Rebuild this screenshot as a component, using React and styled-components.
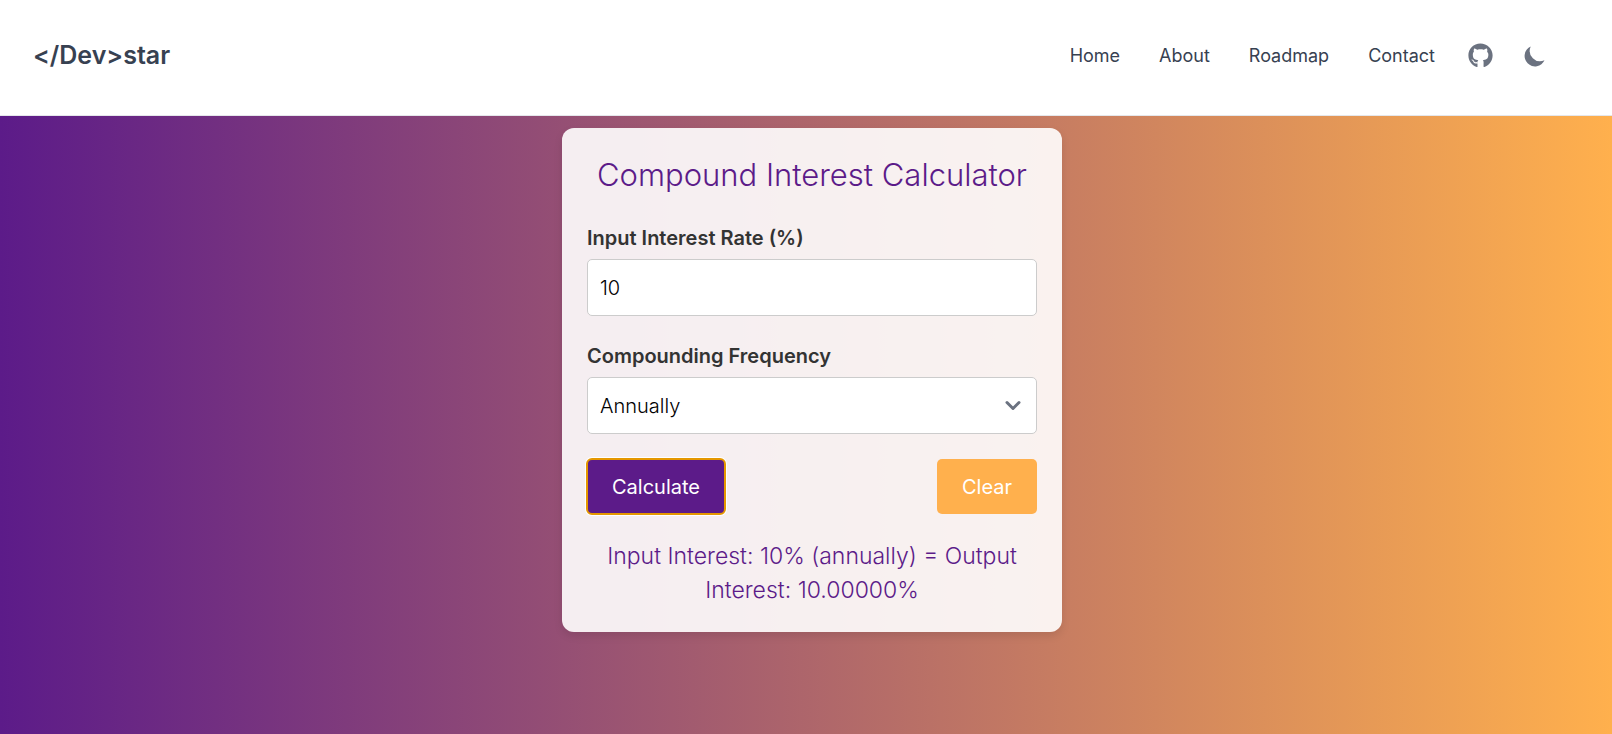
import React, { useState } from "react";
import styled, { createGlobalStyle } from "styled-components";
import { FaGithub } from "react-icons/fa";

const GlobalStyle = createGlobalStyle`
  *, *::before, *::after { box-sizing: border-box; }
  body {
    margin: 0;
    font-family: Inter, "Liberation Sans", sans-serif;
    font-optical-sizing: none;
    background: #fff;
  }
  h1, p { margin: 0; }
  button, input, select { font: inherit; font-optical-sizing: none; }
`;

const Page = styled.div`
  display: flex;
  flex-direction: column;
  min-height: 100vh;
`;

const Header = styled.header`
  display: flex;
  align-items: center;
  justify-content: space-between;
  padding: 32px 64px 36px 33px;
  border-bottom: 1px solid #e5e7eb;
`;

const Brand = styled.a`
  color: #374151;
  font-size: 25px;
  line-height: 47px;
  font-weight: 600;
  text-decoration: none;
`;

const Nav = styled.nav`
  display: flex;
  align-items: center;
  gap: 39px;
`;

const NavLink = styled.a`
  color: #374151;
  font-size: 18px;
  line-height: 28px;
  text-decoration: none;
`;

const NavIcons = styled.div`
  display: flex;
  align-items: center;
  gap: 29px;
  margin-left: -6px;
  color: #6b7280;
`;

const IconLink = styled.a`
  display: flex;
  color: inherit;
`;

const IconButton = styled.button`
  display: flex;
  padding: 0;
  border: 0;
  background: none;
  color: inherit;
`;

const Main = styled.main`
  flex: 1;
  display: flex;
  justify-content: center;
  align-items: flex-start;
  padding: 12px 0 24px 12px;
  background: linear-gradient(to right, #5c1b89, #ffb04d);
`;

const Card = styled.form`
  width: 100%;
  max-width: 500px;
  padding: 25px;
  border-radius: 12px;
  background: rgba(255, 255, 255, 0.9);
  box-shadow: 0 4px 8px rgba(0, 0, 0, 0.1);
`;

const Title = styled.h1`
  margin-bottom: 26px;
  color: #5c1b89;
  font-size: 31px;
  line-height: 44px;
  font-weight: 300;
  text-align: center;
`;

const Field = styled.div`
  display: flex;
  flex-direction: column;
  gap: 6px;
  margin-bottom: 25px;
`;

const Label = styled.label`
  color: #333;
  font-size: 20px;
  line-height: 30px;
  font-weight: 600;
`;

const Control = styled.input`
  width: 100%;
  height: 57px;
  padding: 12px;
  border: 1px solid #ccc;
  border-radius: 5px;
  background: #fff;
  color: #000;
  font-size: 20px;
  font-weight: 300;
  line-height: 30px;
`;

const SelectBox = styled.div`
  display: grid;
  align-items: center;
  > * { grid-area: 1 / 1; }
  > svg { justify-self: end; margin-right: 12px; pointer-events: none; }
`;

const Select = styled(Control)`
  appearance: none;
`;

const Actions = styled.div`
  display: flex;
  justify-content: space-between;
`;

const Button = styled.button`
  padding: 13px 25px 11px;
  border: 0;
  border-radius: 5px;
  background: ${(p) => (p.$primary ? "#5c1b89" : "#ffb04d")};
  color: #fff;
  font-size: 20px;
  line-height: 31px;
  outline: ${(p) => (p.$primary ? "2px solid #e59700" : "none")};
  outline-offset: -1px;
  box-shadow: ${(p) => (p.$primary ? "0 0 0 2px #fff" : "none")};
`;

const Result = styled.p`
  margin-top: 25px;
  color: #5c1b89;
  font-size: 23px;
  line-height: 34px;
  font-weight: 300;
  text-align: center;
`;

const LINKS = ["Home", "About", "Roadmap", "Contact"];
const PERIODS = { Annually: 1, Quarterly: 4, Monthly: 12, Daily: 365 };

const effectiveRate = (rate, n) => ((1 + rate / 100 / n) ** n - 1) * 100;

const describe = ({ rate, period }) =>
  `Input Interest: ${rate}% (${period.toLowerCase()}) = Output Interest: ${effectiveRate(
    Number(rate),
    PERIODS[period]
  ).toFixed(5)}%`;

export default function App() {
  const [rate, setRate] = useState("10");
  const [period, setPeriod] = useState("Annually");
  const [result, setResult] = useState({ rate: "10", period: "Annually" });

  const calculate = (e) => {
    e.preventDefault();
    setResult({ rate, period });
  };
  const clear = () => {
    setRate("");
    setResult(null);
  };

  return (
    <Page>
      <GlobalStyle />
      <Header>
        <Brand href="#">&lt;/Dev&gt;star</Brand>
        <Nav>
          {LINKS.map((name) => (
            <NavLink key={name} href={`#${name.toLowerCase()}`}>{name}</NavLink>
          ))}
          <NavIcons>
            <IconLink href="#github" aria-label="GitHub"><FaGithub size={25} /></IconLink>
            <IconButton type="button" aria-label="Toggle dark mode">
              <svg width="26" height="26" viewBox="0 0 20 20" fill="currentColor">
                <path d="M17.293 13.293A8 8 0 016.707 2.707a8.001 8.001 0 1010.586 10.586z" />
              </svg>
            </IconButton>
          </NavIcons>
        </Nav>
      </Header>
      <Main>
        <Card onSubmit={calculate}>
          <Title>Compound Interest Calculator</Title>
          <Field>
            <Label htmlFor="rate">Input Interest Rate (%)</Label>
            <Control id="rate" inputMode="decimal" value={rate} onChange={(e) => setRate(e.target.value)} />
          </Field>
          <Field>
            <Label htmlFor="period">Compounding Frequency</Label>
            <SelectBox>
              <Select as="select" id="period" value={period} onChange={(e) => setPeriod(e.target.value)}>
                {Object.keys(PERIODS).map((p) => <option key={p}>{p}</option>)}
              </Select>
              <svg width="24" height="24" viewBox="0 0 24 24" fill="none" stroke="#6b7280" strokeWidth="3" strokeLinecap="round" strokeLinejoin="round">
                <path d="M6 8.500l6 6 6-6" />
              </svg>
            </SelectBox>
          </Field>
          <Actions>
            <Button type="submit" $primary>Calculate</Button>
            <Button type="button" onClick={clear}>Clear</Button>
          </Actions>
          {result && <Result>{describe(result)}</Result>}
        </Card>
      </Main>
    </Page>
  );
}
